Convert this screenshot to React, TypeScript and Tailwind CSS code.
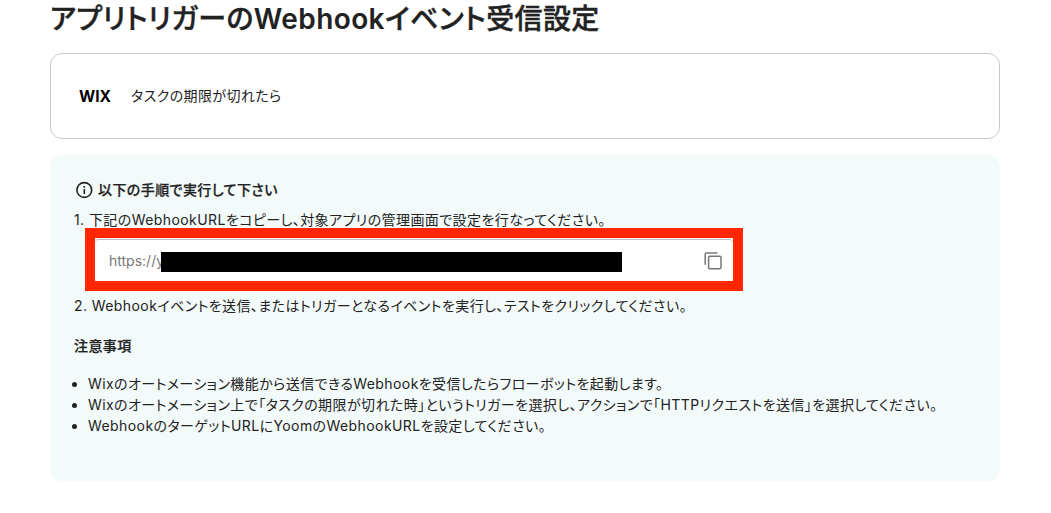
const notes = [
  'Wixのオートメーション機能から送信できるWebhookを受信したらフローボットを起動します。',
  'Wixのオートメーション上で「タスクの期限が切れた時」というトリガーを選択し、アクションで「HTTPリクエストを送信」を選択してください。',
  'WebhookのターゲットURLにYoomのWebhookURLを設定してください。',
];

function InfoIcon() {
  return (
    <svg className="w-5 h-5 flex-shrink-0" viewBox="0 0 20 20" fill="none" stroke="currentColor" strokeWidth="1.6">
      <circle cx="10.3" cy="10" r="7.4" />
      <path d="M10.3 9v5M10.3 6v1.7" />
    </svg>
  );
}

function CopyIcon() {
  return (
    <svg className="w-5 h-5" viewBox="0 0 20 20" fill="none" stroke="currentColor" strokeWidth="1.5">
      <path d="M2.2 13.7V3Q2.2 2 3.2 2H14.5" />
      <rect x="5.6" y="5.2" width="12.4" height="12.6" rx="1.2" />
    </svg>
  );
}

function WixLogo() {
  return (
    <svg className="w-8 h-5 overflow-visible" viewBox="0 0 32 20">
      <text x="0" y="15.5" textLength="32" lengthAdjust="spacingAndGlyphs" fontSize="16.5" fontWeight="700" letterSpacing="0" fill="#000">
        WIX
      </text>
    </svg>
  );
}

export default function App() {
  return (
    <main className="h-[513px] overflow-hidden bg-white px-[50px] text-[14px] leading-[21px] tracking-[0.42px] text-[#222] [font-family:Inter,'Noto_Sans_CJK_JP',sans-serif] [font-feature-settings:'palt']">
      <h1 className="h-[53px] whitespace-nowrap text-[28px] font-medium leading-[38px] tracking-[0.4px] [-webkit-text-stroke:0.4px_#222]">
        アプリトリガーの<span className="font-semibold [-webkit-text-stroke:0]">Webhook</span>イベント受信設定
      </h1>

      <section className="flex h-[86px] w-[950px] items-center gap-5 rounded-xl border border-[#c8c8c8] px-7">
        <WixLogo />
        <p className="pb-0.5">タスクの期限が切れたら</p>
      </section>

      <section className="mt-4 h-[326px] w-[950px] rounded-xl bg-[#f3fafa] px-6 pt-6">
        <div className="flex h-[22px] items-center gap-1 font-medium">
          <InfoIcon />
          <h2 className="pb-0.5 [-webkit-text-stroke:0.25px_#222]">以下の手順で実行して下さい</h2>
        </div>
        <p className="mt-2 h-[19px] whitespace-nowrap">1. 下記のWebhookURLをコピーし、対象アプリの管理画面で設定を行なってください。</p>

        <div className="ml-[11px] flex h-[63px] w-[658px] items-center border-10 border-[#ff2600] bg-white pt-px">
          <div className="flex h-full w-full items-center rounded-t border-t border-[#c0c0c0] pl-[14px] pr-[10px] pt-0.5">
            <span className="w-[52px] whitespace-nowrap pb-0.5 tracking-normal text-[#777]">https://y</span>
            <span className="relative h-5 w-[461px] bg-black" />
            <button className="ml-auto pb-px text-[#777]" aria-label="コピー">
              <CopyIcon />
            </button>
          </div>
        </div>

        <p className="mt-1 whitespace-nowrap">2. Webhookイベントを送信、またはトリガーとなるイベントを実行し、テストをクリックしてください。</p>
        <h3 className="mt-[19px] font-medium [-webkit-text-stroke:0.25px_#222]">注意事項</h3>
        <ul className="mt-[17px] list-disc pl-[14px]">
          {notes.map(note => (
            <li key={note} className="whitespace-nowrap">{note}</li>
          ))}
        </ul>
      </section>
    </main>
  );
}
